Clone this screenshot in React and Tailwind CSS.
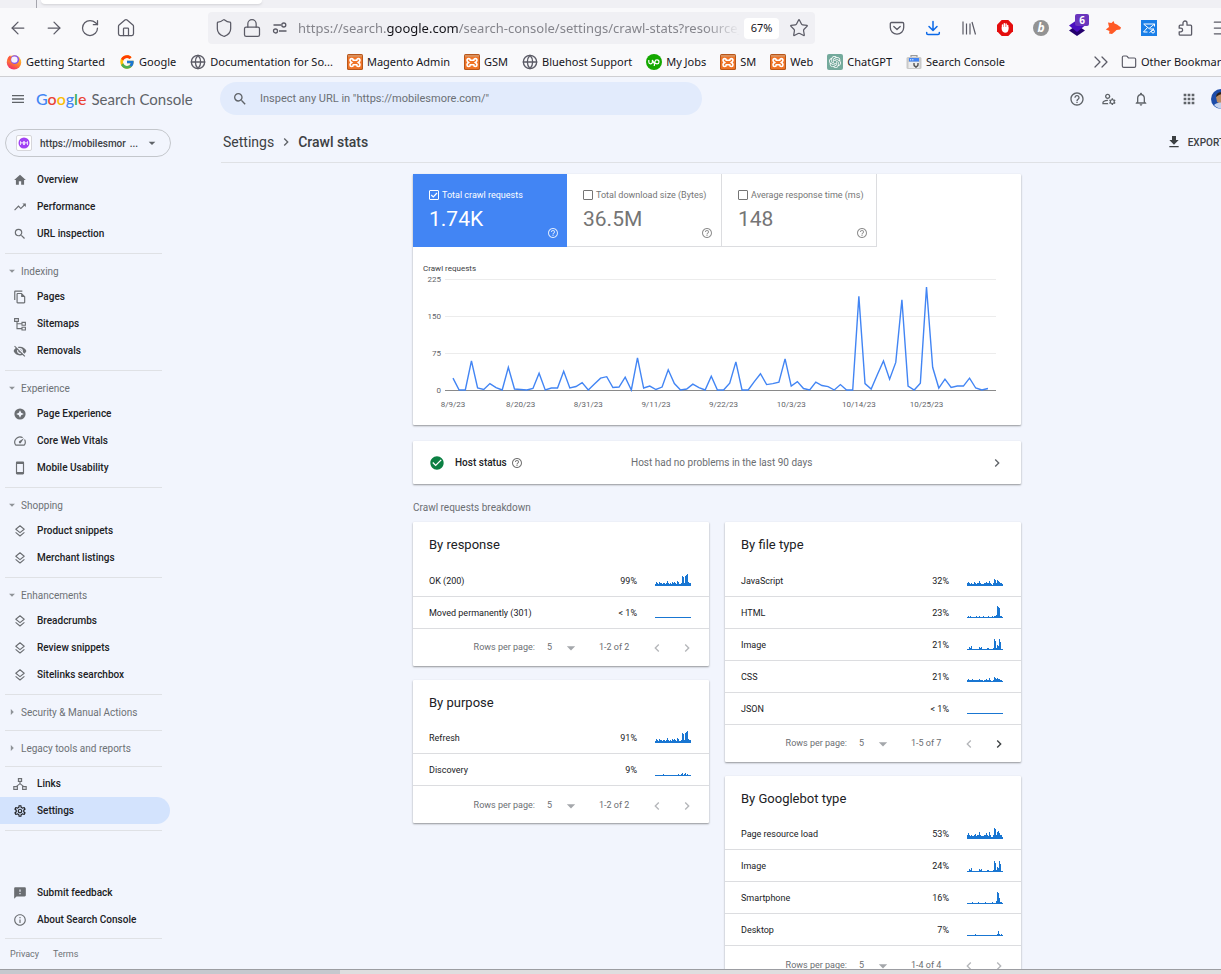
import { ArrowLeft, ArrowRight, ChevronsRight, Folder, Globe, Home, Lock, Menu, RotateCw, Shield, Star } from "lucide-react";
import {
  MdApps,
  MdArrowDropDown,
  MdArrowRight,
  MdCheckCircle,
  MdChevronLeft,
  MdChevronRight,
  MdDownload,
  MdFeedback,
  MdHelpOutline,
  MdHome,
  MdInfoOutline,
  MdMenu,
  MdNotificationsNone,
  MdOutlineFileCopy,
  MdOutlineManageAccounts,
  MdOutlineSettings,
  MdOutlineSpeed,
  MdSearch,
  MdStayCurrentPortrait,
  MdTrendingUp,
  MdVisibilityOff,
} from "react-icons/md";
import { SiOpenai } from "react-icons/si";
import { FcGoogle } from "react-icons/fc";

const crawlRequests = [
  24, 0, 0, 59, 4, 1, 13, 5, 0, 46, 2, 1, 0, 3, 34, 0, 4, 4, 38, 4, 7, 15, 0, 12, 24, 27, 5, 6, 26, 0, 65, 4, 8, 1, 6, 41, 13,
  0, 2, 12, 5, 0, 28, 0, 0, 14, 57, 0, 0, 17, 33, 11, 13, 16, 63, 8, 17, 3, 0, 16, 9, 7, 0, 11, 0, 0, 190, 13, 2, 31, 59, 22,
  56, 183, 8, 0, 14, 209, 46, 4, 22, 5, 8, 8, 24, 4, 0, 3,
];

// one bar per pixel of the 36px sparkline
const trends = {
  all: [2, 4, 3, 2, 4, 3, 3, 2, 3, 3, 2, 3, 5, 3, 2, 3, 2, 4, 3, 4, 3, 2, 5, 4, 2, 2, 3, 10, 9, 3, 10, 11, 12, 4, 3, 3],
  flat: [1, 1, 1, 1, 1, 1, 1, 1, 1, 1, 1, 1, 1, 1, 1, 1, 1, 1, 1, 1, 1, 1, 1, 1, 1, 1, 1, 1, 1, 1, 1, 1, 1, 1, 1, 1],
  scripts: [3, 4, 3, 2, 3, 2, 2, 4, 3, 2, 3, 3, 5, 3, 2, 2, 2, 3, 3, 4, 3, 3, 5, 3, 2, 1, 3, 7, 6, 3, 6, 5, 4, 3, 3, 2],
  html: [1, 2, 1, 2, 1, 1, 1, 1, 1, 2, 1, 1, 2, 1, 1, 1, 2, 1, 1, 1, 1, 2, 1, 1, 1, 2, 1, 2, 2, 3, 12, 11, 10, 2, 2, 1],
  image: [1, 1, 3, 2, 4, 1, 1, 1, 1, 1, 1, 1, 3, 2, 3, 1, 1, 1, 1, 1, 2, 2, 1, 1, 1, 1, 2, 11, 9, 2, 5, 4, 11, 8, 1, 1],
  css: [2, 3, 2, 2, 2, 3, 2, 2, 2, 2, 2, 2, 3, 2, 2, 2, 1, 2, 2, 3, 2, 2, 4, 2, 1, 1, 2, 5, 4, 3, 4, 3, 3, 2, 2, 1],
  resource: [4, 6, 4, 3, 4, 3, 3, 4, 5, 3, 4, 4, 7, 4, 3, 3, 3, 4, 4, 6, 4, 3, 7, 4, 2, 2, 4, 11, 10, 4, 7, 8, 6, 4, 4, 2],
  phone: [1, 1, 1, 1, 1, 2, 1, 1, 1, 1, 1, 2, 1, 1, 1, 1, 1, 1, 2, 1, 1, 1, 1, 1, 1, 2, 1, 1, 1, 3, 12, 11, 6, 2, 2, 1],
  desktop: [1, 1, 1, 1, 1, 1, 1, 1, 2, 1, 1, 1, 1, 1, 1, 1, 1, 1, 1, 1, 1, 1, 1, 1, 1, 1, 1, 1, 1, 1, 2, 5, 2, 1, 2, 1],
  discovery: [1, 1, 1, 1, 1, 1, 1, 1, 2, 1, 1, 1, 1, 1, 1, 1, 1, 1, 1, 1, 1, 1, 1, 2, 1, 1, 2, 3, 1, 2, 3, 1, 2, 1, 1, 1],
};

const SitemapIcon = () => (
  <svg viewBox="0 0 14 14" className="size-3.5" fill="none" stroke="currentColor" strokeWidth="1.1">
    <path d="M1.6 1.6h3.8v2.8H1.6zM9 5.4h3.4v2.8H9zM9 10.2h3.4V13H9zM4 4.4v7.2h5M4 6.8h5" />
  </svg>
);

const LinksIcon = () => (
  <svg viewBox="0 0 14 14" className="size-3.5" fill="none" stroke="currentColor" strokeWidth="1.1">
    <path d="M5.4 1.6h3.2v2.8H5.4zM.8 9.6h3.6v2.8H.8zM9.6 9.600h3.6v2.8H9.600zM7 4.4v2.4M3.200 9.600 7 6.6l3.800 3" />
  </svg>
);

const LayersIcon = () => (
  <svg viewBox="0 0 14 14" className="size-3.5" fill="none" stroke="currentColor" strokeWidth="1.1" strokeLinejoin="round">
    <path d="M7 1.8 11.2 5.2 7 8.600 2.8 5.2zM2.6 8.4 7 12l4.4-3.6" />
  </svg>
);

const ExperienceIcon = () => (
  <svg viewBox="0 0 14 14" className="size-3.5">
    <circle cx="7" cy="7" r="5.6" fill="currentColor" />
    <path d="M7 3.2 8.2 5.8 10.8 7 8.2 8.2 7 10.8 5.8 8.2 3.2 7l2.6-1.2z" fill="#f2f5fd" />
  </svg>
);

const navGroups = [
  {
    items: [
      { label: "Overview", icon: <MdHome /> },
      { label: "Performance", icon: <MdTrendingUp /> },
      { label: "URL inspection", icon: <MdSearch /> },
    ],
  },
  {
    title: "Indexing",
    items: [
      { label: "Pages", icon: <MdOutlineFileCopy /> },
      { label: "Sitemaps", icon: <SitemapIcon /> },
      { label: "Removals", icon: <MdVisibilityOff /> },
    ],
  },
  {
    title: "Experience",
    items: [
      { label: "Page Experience", icon: <ExperienceIcon /> },
      { label: "Core Web Vitals", icon: <MdOutlineSpeed /> },
      { label: "Mobile Usability", icon: <MdStayCurrentPortrait /> },
    ],
  },
  {
    title: "Shopping",
    items: [
      { label: "Product snippets", icon: <LayersIcon /> },
      { label: "Merchant listings", icon: <LayersIcon /> },
    ],
  },
  {
    title: "Enhancements",
    items: [
      { label: "Breadcrumbs", icon: <LayersIcon /> },
      { label: "Review snippets", icon: <LayersIcon /> },
      { label: "Sitelinks searchbox", icon: <LayersIcon /> },
    ],
  },
  { title: "Security & Manual Actions" },
  { title: "Legacy tools and reports" },
  {
    items: [
      { label: "Links", icon: <LinksIcon /> },
      { label: "Settings", icon: <MdOutlineSettings />, active: true },
    ],
  },
];

const HostingIcon = () => (
  <svg viewBox="0 0 16 16" className="size-4">
    <rect width="16" height="16" rx="1.5" fill="#b8571b" />
    <rect x="1" y="1" width="14" height="14" rx="1" fill="#f07427" />
    <path d="M1 1h14v1.800H1z" fill="#d9915f" />
    <path
      d="M6.300 6.300C6.300 4 3 4 3 6.300c0 1.200.8 1.700 1.600 2.200-.8.500-1.600 1-1.600 2.200 0 2.300 3.300 2.300 3.300 0h3.400c0 2.300 3.300 2.300 3.300 0 0-1.200-.8-1.700-1.600-2.200.8-.5 1.600-1 1.600-2.200 0-2.300-3.300-2.300-3.300 0z"
      fill="none"
      stroke="#fff"
      strokeWidth="1.600"
    />
  </svg>
);

const FirefoxIcon = () => (
  <svg viewBox="0 0 16 16" className="size-4">
    <defs>
      <linearGradient id="flame" x1="0.8" y1="0" x2="0.3" y2="1">
        <stop offset="0" stopColor="#ffd43a" />
        <stop offset="0.5" stopColor="#ff8a2b" />
        <stop offset="1" stopColor="#f0256c" />
      </linearGradient>
    </defs>
    <circle cx="8" cy="8.4" r="7.2" fill="url(#flame)" />
    <circle cx="8.8" cy="5.600" r="4.4" fill="#8a55e8" />
    <circle cx="8.4" cy="5.600" r="3.2" fill="#f7f2ff" />
    <path d="M1.4 5.4C1.8 3.4 3 2 4.4 1.2c-.2 1 .2 1.800 1 2.200L4 7z" fill="#ff5a3c" />
  </svg>
);

const SearchConsoleIcon = () => (
  <svg viewBox="0 0 16 16" className="size-4">
    <path d="M5 3V1.600h6V3" fill="none" stroke="#9a9a9a" strokeWidth="1.2" />
    <rect x=".5" y="3" width="15" height="12" rx="1.500" fill="#c9c9c9" />
    <path d="M2.500 8h11v6h-11z" fill="#ececec" />
    <path d="M3 4h10v3.500H3z" fill="#4285f4" />
    <path d="M4 5.800h1.200M6.200 5.800h1.200" stroke="#fff" />
    <path d="M8 9v1.600a2 2 0 0 0 4 0V9M10 12.500V14" fill="none" stroke="#555" strokeWidth="1.400" />
  </svg>
);

const bookmarks = [
  { label: "Getting Started", icon: <FirefoxIcon /> },
  { label: "Google", icon: <FcGoogle className="size-4" /> },
  { label: "Documentation for So...", icon: <Globe className="size-4 text-[#5b5b66]" /> },
  { label: "Magento Admin", icon: <HostingIcon /> },
  { label: "GSM", icon: <HostingIcon /> },
  { label: "Bluehost Support", icon: <Globe className="size-4 text-[#5b5b66]" /> },
  {
    label: "My Jobs",
    icon: (
      <svg viewBox="0 0 16 16" className="size-4">
        <circle cx="8" cy="8" r="8" fill="#14a800" />
        <path d="M2.800 6v2a1.800 1.800 0 0 0 3.600 0V6l1.800 3.500M8.200 12l.8-4.300a2 2 0 1 1 2 2.200c-1.200 0-2.200-.9-3-2" fill="none" stroke="#fff" strokeWidth="1.200" />
      </svg>
    ),
  },
  { label: "SM", icon: <HostingIcon /> },
  { label: "Web", icon: <HostingIcon /> },
  {
    label: "ChatGPT",
    icon: (
      <span className="flex size-4 items-center justify-center rounded-[2px] bg-[#74aa9c] text-xs text-white">
        <SiOpenai />
      </span>
    ),
  },
  { label: "Search Console", icon: <SearchConsoleIcon /> },
];

const extensions = [
  {
    name: "Pocket",
    icon: (
      <svg viewBox="0 0 16 16" className="size-4" fill="none" stroke="#5b5b66" strokeWidth="1.300" strokeLinecap="round" strokeLinejoin="round">
        <path d="M2.500 2.500h11c.7 0 1.200.5 1.200 1.200v3.800a6.700 6.700 0 0 1-13.400 0V3.700c0-.7.500-1.200 1.200-1.200zM4.800 6.500 8 9.500l3.200-3" />
      </svg>
    ),
  },
  {
    name: "Downloads",
    icon: (
      <svg viewBox="0 0 16 16" className="size-4" fill="none" stroke="#0a68e8" strokeWidth="1.500" strokeLinecap="round" strokeLinejoin="round">
        <path d="M8 1.500v8.700M4 6.500l4 4 4-4M1.700 12.500v.8c0 .8.500 1.300 1.300 1.300h10c.8 0 1.300-.5 1.300-1.300v-.8" />
      </svg>
    ),
  },
  {
    name: "Library",
    icon: (
      <svg viewBox="0 0 16 16" className="size-4" fill="none" stroke="#5b5b66" strokeWidth="1.200">
        <path d="M2 1.500v13M5.500 3.500v11M9 3.500v11M11 2l3.500 12.500" />
      </svg>
    ),
  },
  {
    name: "Ad blocker",
    icon: (
      <svg viewBox="0 0 16 16" className="size-4">
        <path d="M4.700 0h6.600L16 4.700v6.600L11.300 16H4.700L0 11.300V4.700z" fill="#e40d0d" />
        <path d="M5.500 9V5M7.300 8V3.600M9.100 8V4M10.700 9V5.500" stroke="#fff" strokeWidth="1.400" strokeLinecap="round" />
        <path d="M4.800 7h6.600v2.500c0 2-1.300 3.300-3.200 3.300-1.700 0-2.600-1-3.400-2.800z" fill="#fff" />
      </svg>
    ),
  },
  {
    name: "Bitly",
    icon: (
      <span className="flex size-4 items-center justify-center rounded-full bg-[#939393] font-['Open_Sans',sans-serif] text-xs font-bold text-white italic">
        b
      </span>
    ),
  },
  {
    name: "Page inspector",
    icon: (
      <span className="relative">
        <svg viewBox="0 0 16 16" className="size-4">
          <path d="M0 10.500 8 5l8 5.500L8 16z" fill="#24006e" />
          <path d="M0 5.500 8 0l8 5.500L8 12z" fill="#4b0fc0" />
        </svg>
        <span className="absolute -top-1.5 left-1.5 flex h-3 w-3.5 items-center justify-center rounded-[2px] bg-[#6a35bd] text-[10px] font-bold text-white">
          6
        </span>
      </span>
    ),
  },
  {
    name: "Fox",
    icon: (
      <svg viewBox="0 0 16 16" className="size-4" fill="#ff5a26">
        <path d="M3 2.500 6.500 3 8.500 1l1 2.500 2.500 1L16 7.500l-.8 2-3.700.6-1.500 1.400L7 14l-3-.5.500-2.500L.8 9.500 4 7z" />
      </svg>
    ),
  },
  {
    name: "Mail tracker",
    icon: (
      <svg viewBox="0 0 16 16" className="size-4">
        <path d="M0 0h16v16H0z" fill="#1a7fe8" />
        <path d="M6.500 12h-4M3 4h10.500v2.500M2.500 4l5.500 4.500L13.500 4M2.500 12l4-4.500M8.500 9h4.500l-4.500 3.500M10.500 11.500a1.500 1.500 0 1 0 3 0 1.500 1.500 0 0 0-3 0" fill="none" stroke="#fff" strokeWidth="1" />
      </svg>
    ),
  },
  {
    name: "Extensions",
    icon: (
      <svg viewBox="0 0 16 16" className="size-4" fill="none" stroke="#5b5b66" strokeWidth="1.300" strokeLinejoin="round">
        <path d="M6 3a2 2 0 0 1 4 0v2.200h3.600c.6 0 1 .4 1 1v8c0 .6-.4 1-1 1H3.200c-.6 0-1-.4-1-1v-2.400h1.600a1.800 1.800 0 0 0 0-3.600H2.200v-2c0-.6.4-1 1-1H6z" />
      </svg>
    ),
  },
  { name: "Menu", icon: <Menu className="size-5 text-[#5b5b66]" strokeWidth={1.5} /> },
];

const BrowserChrome = () => (
  <div className="shrink-0 border-b border-[#cfcfd3] bg-[#f9f9fb] font-['Noto_Sans','Open_Sans',sans-serif]">
    <div className="flex h-2 bg-[#f0f0f4]">
      <div className="w-[37px] border-r border-[#a5a5ad]" />
      <div className="ml-1 h-1 w-[221px] rounded-b-sm bg-white shadow" />
    </div>

    <div className="flex h-10 items-center">
      <div className="flex w-[208px] shrink-0 items-center gap-4 pl-2 text-[#5b5b66]">
        <button aria-label="Back"><ArrowLeft className="size-5" strokeWidth={1.5} /></button>
        <button aria-label="Forward"><ArrowRight className="size-5" strokeWidth={1.5} /></button>
        <button aria-label="Reload"><RotateCw className="size-5" strokeWidth={1.5} /></button>
        <button aria-label="Home"><Home className="size-5" strokeWidth={1.5} /></button>
      </div>

      <div className="flex h-8 w-[607px] shrink-0 items-center rounded bg-[#f0f0f4] px-1.5">
        <div className="flex w-[84px] shrink-0 items-center gap-2 text-[#5b5b66]">
          <Shield className="size-5" strokeWidth={1.5} />
          <Lock className="size-5" strokeWidth={1.5} />
          <svg viewBox="-2 -2 20 20" className="size-5" fill="none" stroke="currentColor" strokeWidth="1.300">
            <path d="M1.500 5H9M7 11h7.500" />
            <circle cx="11.800" cy="5" r="2" />
            <circle cx="3.500" cy="11" r="2" />
          </svg>
        </div>
        <div className="min-w-0 flex-1 pt-0.5 text-[13px] whitespace-nowrap text-[#85858c] [mask-image:linear-gradient(to_right,black_92%,transparent)]">
          https://search.<span className="text-[#15141a]">google.com</span>/search-console/settings/crawl-stats?resource_
        </div>
        <button className="ml-1 h-[21px] w-[35px] rounded-sm bg-white pt-px text-[11px] text-[#15141a]">67%</button>
        <button aria-label="Bookmark this page" className="ml-2.5 text-[#5b5b66]">
          <Star className="size-5" strokeWidth={1.5} />
        </button>
      </div>

      <div className="ml-auto flex items-center pr-1.5">
        {extensions.map((extension) => (
          <button key={extension.name} aria-label={extension.name} className="flex w-9 items-center justify-center">
            {extension.icon}
          </button>
        ))}
      </div>
    </div>

    <div className="flex h-7 items-center pl-1.5 text-[11px] whitespace-nowrap text-[#15141a]">
      <div className="flex items-center gap-3.5">
        {bookmarks.map((bookmark) => (
          <a key={bookmark.label} href="#" className="flex items-center gap-1">
            {bookmark.icon}
            {bookmark.label}
          </a>
        ))}
      </div>
      <div className="ml-auto flex w-[156px] shrink-0 items-center">
        <button aria-label="More bookmarks" className="text-[#5b5b66]"><ChevronsRight className="size-6" strokeWidth={1.25} /></button>
        <a href="#" className="ml-2 flex items-center gap-1">
          <Folder className="size-4 text-[#5b5b66]" strokeWidth={1.75} />
          Other Bookmarks
        </a>
      </div>
    </div>
  </div>
);

const ConsoleHeader = () => (
  <header className="flex h-[43px] shrink-0 items-center">
    <div className="flex w-[220px] shrink-0 items-center gap-2.5 pl-2.5">
      <button aria-label="Main menu" className="text-[#5f6368]"><MdMenu className="size-4" /></button>
      <a href="#" className="flex items-baseline gap-[5px] font-['Lato',sans-serif] whitespace-nowrap text-[#5f6368]">
        <span className="text-base font-medium">
          <span className="text-[#4285f4]">G</span>
          <span className="text-[#ea4335]">o</span>
          <span className="text-[#fbbc04]">o</span>
          <span className="text-[#4285f4]">g</span>
          <span className="text-[#34a853]">l</span>
          <span className="text-[#ea4335]">e</span>
        </span>
        <span className="text-[15px]">Search Console</span>
      </a>
    </div>

    <label className="flex h-[33px] w-[482px] items-center gap-3 rounded-full bg-[#e2ebfc] pl-3 text-[#5f6368]">
      <MdSearch className="size-4" />
      <input
        aria-label="Inspect any URL"
        placeholder={'Inspect any URL in "https://mobilesmore.com/"'}
        className="flex-1 bg-transparent pt-px text-[11px] outline-none placeholder:text-[#6b7075]"
      />
    </label>

    <div className="ml-auto flex items-center gap-4 pr-3.5 text-[#5f6368]">
      <button aria-label="Help"><MdHelpOutline className="size-4" /></button>
      <button aria-label="Users"><MdOutlineManageAccounts className="size-4" /></button>
      <button aria-label="Notifications"><MdNotificationsNone className="size-4" /></button>
      <button aria-label="Google apps" className="ml-4"><MdApps className="size-4" /></button>
      <button aria-label="Account" className="-ml-0.5">
        <svg viewBox="0 0 20 20" className="size-5">
          <circle cx="10" cy="10" r="10" fill="#1b4ba8" />
          <path d="M5 7.500C6 4 9 3 12 4l2 5-4 6-4-2z" fill="#b98a63" />
          <path d="M5 8c0-4 4-6 8-4l-5 2z" fill="#2a211c" />
          <path d="M3 16c2-2 6-3 10-2l2 5a10 10 0 0 1-12-3z" fill="#c4d2ec" />
        </svg>
      </button>
    </div>
  </header>
);

const Sidebar = () => (
  <nav className="w-[189px] shrink-0 pt-[9px] text-[10px] font-medium text-[#202124]">
    <button className="ml-[5px] flex h-7 w-[166px] items-center rounded-full border border-[#c4c7cc] pl-2.5 text-[#3c4043]">
      <span className="flex size-4 items-center justify-center rounded-[2px] border border-[#d6d6da] bg-white">
        <svg viewBox="0 0 12 12" className="size-3">
          <circle cx="6" cy="6" r="5.500" fill="#a142f4" />
          <path d="M2.500 8V4.500L4 6.500l1.500-2V8M6.500 8V4.500L8 6.500l1.500-2V8" fill="none" stroke="#fff" strokeWidth=".8" />
        </svg>
      </span>
      <span className="ml-2 flex w-[98px] justify-between">
        <span>https://mobilesmor</span>
        <span>...</span>
      </span>
      <MdArrowDropDown className="ml-1.5 size-4 text-[#5f6368]" />
    </button>

    <div className="pt-1.5">
      {navGroups.map((group, index) => (
        <section key={index} className="mr-[27px] ml-[5px] border-b border-[#dfe1e5] pt-[3px] pb-1.5">
          {group.title && (
            <h2 className="flex h-[26px] items-center gap-0.5 pt-0.5 font-normal text-[#6d7175]">
              {group.items ? <MdArrowDropDown className="size-3.5 text-[#8f9398]" /> : <MdArrowRight className="size-3.5 text-[#8f9398]" />}
              {group.title}
            </h2>
          )}
          {group.items?.map((item) => (
            <a
              key={item.label}
              href="#"
              className={`-mr-2 -ml-[5px] flex h-[27px] items-center gap-2.5 pl-[13px] ${item.active ? "rounded-r-full bg-[#d3e3fd]" : ""}`}
            >
              <span className={`text-sm ${item.active ? "text-[#202124]" : "text-[#6b6e72]"}`}>{item.icon}</span>
              {item.label}
            </a>
          ))}
        </section>
      ))}
    </div>

    <section className="mt-12 mr-[27px] ml-[5px] border-b border-[#dfe1e5] pb-[5px]">
      <a href="#" className="flex h-[27px] items-center gap-2.5 pl-2">
        <MdFeedback className="size-3.5 text-[#6b6e72]" />
        Submit feedback
      </a>
      <a href="#" className="flex h-[27px] items-center gap-2.5 pl-2">
        <MdInfoOutline className="size-3.5 text-[#6b6e72]" />
        About Search Console
      </a>
    </section>
    <div className="flex gap-3.5 px-2.5 pt-[9px] text-[9px] font-normal text-[#6d7175]">
      <a href="#">Privacy</a>
      <a href="#">Terms</a>
    </div>
  </nav>
);

const Metric = ({ id, label, value, checked }) => (
  <div className={`flex h-[73px] flex-col px-4 pt-3.5 ${checked ? "w-[154px] bg-[#4285f4] text-white" : "w-[155px] border-r border-b border-[#dcdde0] text-[#757575]"}`}>
    <label htmlFor={id} className="flex items-center gap-[3px] text-[9px] leading-[14px] whitespace-nowrap">
      <span className="relative flex size-2.5 shrink-0">
        <input id={id} type="checkbox" defaultChecked={checked} className="peer size-2.5 appearance-none rounded-[1px] border border-current" />
        <svg viewBox="0 0 10 10" className="pointer-events-none absolute inset-0 hidden size-2.5 peer-checked:block" fill="none" stroke="currentColor" strokeWidth="1.200">
          <path d="M2.200 5 4.300 7 8 3" />
        </svg>
      </span>
      {label}
    </label>
    <p className="mt-[5px] text-[21px] leading-6">{value}</p>
    <button aria-label={`About ${label}`} className="-mt-1 -mr-2 self-end opacity-80">
      <MdHelpOutline className="size-3" />
    </button>
  </div>
);

const CrawlChart = () => {
  const step = 535 / (crawlRequests.length - 1);
  const points = crawlRequests.map((count, index) => `${40 + index * step},${143 - count * 0.493}`).join(" ");
  const dates = ["8/9/23", "8/20/23", "8/31/23", "9/11/23", "9/22/23", "10/3/23", "10/14/23", "10/25/23"];

  return (
    <svg viewBox="0 0 608 178" className="block w-full font-['Roboto',sans-serif] text-[8px]" fill="#5f6368" role="img" aria-label="Crawl requests">
      <text x="10" y="24" fill="#3c4043">Crawl requests</text>
      {[225, 150, 75, 0].map((tick, index) => (
        <g key={tick}>
          <line x1="32" x2="583" y1={32.5 + index * 37} y2={32.5 + index * 37} stroke={tick ? "#ececec" : "#8a8a8a"} />
          <text x="28" y={35 + index * 37} textAnchor="end">{tick}</text>
        </g>
      ))}
      <polyline points={points} fill="none" stroke="#4285f4" strokeWidth="1.400" />
      {dates.map((date, index) => (
        <text key={date} x={40 + index * 11 * step} y="160" textAnchor="middle">{date}</text>
      ))}
    </svg>
  );
};

const Sparkline = ({ data }) => (
  <svg viewBox="0 0 36 12" className="block h-3 w-9" fill="#1976d2" shapeRendering="crispEdges" aria-hidden="true">
    {data.map((value, index) => (
      <rect key={index} x={index} y={12 - value} width="1" height={value} />
    ))}
  </svg>
);

const BreakdownCard = ({ title, rows, range, hasNext }) => (
  <section className="rounded-[1px] bg-white shadow-[0_1px_2px_rgba(0,0,0,0.4)]">
    <h3 className="px-4 pt-3 pb-[9px] text-[13px] leading-[21px] text-[#202124]">{title}</h3>
    <table className="w-full text-[9px] text-[#202124]">
      <tbody>
        {rows.map((row) => (
          <tr key={row.name} className="h-8 border-b border-[#dcdde0]">
            <td className="pt-[3px] pl-4">{row.name}</td>
            <td className="w-16 pt-[3px] text-right">{row.share}</td>
            <td className="w-[72px] pl-[18px]"><Sparkline data={row.trend} /></td>
          </tr>
        ))}
      </tbody>
    </table>
    <div className="flex h-[37px] items-center justify-end pt-0.5 pr-3.5 text-[9px] text-[#6b6e72]">
      <label className="flex items-center gap-3">
        Rows per page:
        <span className="relative flex items-center">
          <select defaultValue="5" className="w-8 appearance-none bg-transparent">
            <option>5</option>
            <option>10</option>
            <option>25</option>
          </select>
          <MdArrowDropDown className="pointer-events-none absolute -right-0.5 size-5 text-[#a4a7ab]" />
        </span>
      </label>
      <span className="ml-5 w-[50px]">{range}</span>
      <button aria-label="Previous page" disabled className="text-[#b4b6b9]"><MdChevronLeft className="size-4" /></button>
      <button aria-label="Next page" disabled={!hasNext} className={`ml-3.5 ${hasNext ? "text-[#3c4043]" : "text-[#b4b6b9]"}`}>
        <MdChevronRight className="size-4" />
      </button>
    </div>
  </section>
);

const CrawlStats = () => (
  <main className="min-w-0 flex-1">
    <div className="ml-8 flex h-[43px] items-center border-b border-[#dfe1e5] pt-0.5 pr-5 text-[#3c4043]">
      <nav aria-label="Breadcrumb" className="flex items-center gap-1 pl-0.5 text-sm">
        <a href="#">Settings</a>
        <MdChevronRight className="size-4 text-[#5f6368]" />
        <span className="font-medium">Crawl stats</span>
      </nav>
      <button className="ml-auto flex items-center gap-1.5 text-[10px] font-medium">
        <MdDownload className="size-4" />
        EXPORT
      </button>
    </div>

    <div className="mx-auto max-w-[608px] pt-[11px]">
      <section className="rounded-[1px] bg-white shadow-[0_1px_2px_rgba(0,0,0,0.4)]">
        <div className="flex">
          <Metric id="requests" label="Total crawl requests" value="1.74K" checked />
          <Metric id="size" label="Total download size (Bytes)" value="36.5M" />
          <Metric id="time" label="Average response time (ms)" value="148" />
        </div>
        <CrawlChart />
      </section>

      <a href="#" className="mt-4 flex h-[43px] items-center rounded-[1px] bg-white px-4 text-[10px] shadow-[0_1px_2px_rgba(0,0,0,0.4)]">
        <MdCheckCircle className="size-4 text-[#0b8043]" />
        <span className="ml-2.5 flex w-44 items-center gap-1 font-medium text-[#202124]">
          Host status
          <MdHelpOutline className="size-3 text-[#757575]" />
        </span>
        <span className="text-[#6b6e72]">Host had no problems in the last 90 days</span>
        <MdChevronRight className="ml-auto size-4 text-[#5f6368]" />
      </a>

      <h2 className="pt-4 pb-[7px] text-[10px] leading-[15px] text-[#6b6e72]">Crawl requests breakdown</h2>

      <div className="grid grid-cols-2 items-start gap-4">
        <div className="grid gap-3.5">
          <BreakdownCard
            title="By response"
            range="1-2 of 2"
            rows={[
              { name: "OK (200)", share: "99%", trend: trends.all },
              { name: "Moved permanently (301)", share: "< 1%", trend: trends.flat },
            ]}
          />
          <BreakdownCard
            title="By purpose"
            range="1-2 of 2"
            rows={[
              { name: "Refresh", share: "91%", trend: trends.all },
              { name: "Discovery", share: "9%", trend: trends.discovery },
            ]}
          />
        </div>
        <div className="grid gap-3.5">
          <BreakdownCard
            title="By file type"
            range="1-5 of 7"
            hasNext
            rows={[
              { name: "JavaScript", share: "32%", trend: trends.scripts },
              { name: "HTML", share: "23%", trend: trends.html },
              { name: "Image", share: "21%", trend: trends.image },
              { name: "CSS", share: "21%", trend: trends.css },
              { name: "JSON", share: "< 1%", trend: trends.flat },
            ]}
          />
          <BreakdownCard
            title="By Googlebot type"
            range="1-4 of 4"
            rows={[
              { name: "Page resource load", share: "53%", trend: trends.resource },
              { name: "Image", share: "24%", trend: trends.image },
              { name: "Smartphone", share: "16%", trend: trends.phone },
              { name: "Desktop", share: "7%", trend: trends.desktop },
            ]}
          />
        </div>
      </div>
    </div>
  </main>
);

export default function App() {
  return (
    <div className="flex h-screen flex-col overflow-hidden bg-[#f2f5fd] font-['Roboto',sans-serif]">
      {/* the window runs a little past the right edge of the screen */}
      <div className="flex min-h-0 w-[calc(100%+24px)] flex-1 flex-col overflow-hidden">
        <BrowserChrome />
        <ConsoleHeader />
        <div className="flex min-h-0 flex-1 overflow-hidden">
          <Sidebar />
          <CrawlStats />
        </div>
      </div>
      <div className="flex h-[5px] shrink-0 border-t border-[#9c9da2] bg-[#dededf]">
        <div className="w-[340px] bg-[#c6c8ce]" />
      </div>
    </div>
  );
}
